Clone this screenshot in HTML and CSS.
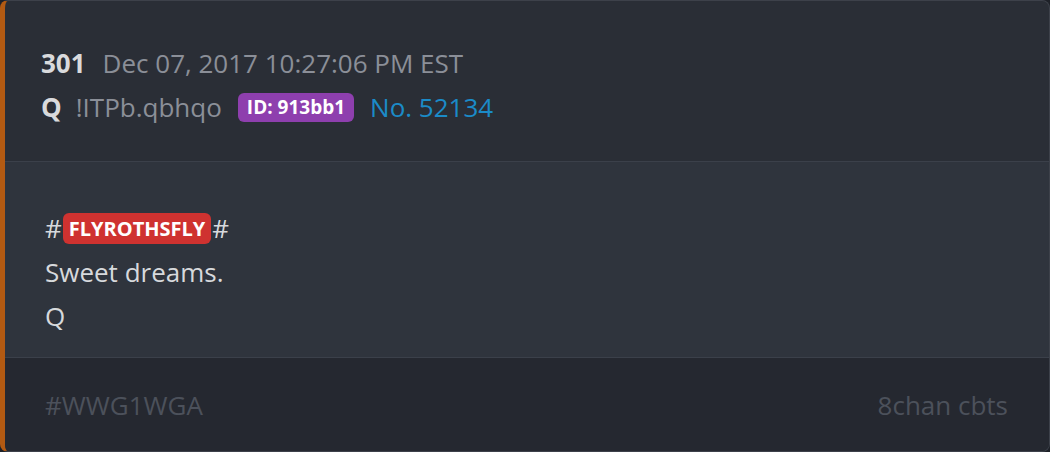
FILE: index.html
```html
<!DOCTYPE html>
<html lang="en">
  <head>
    <meta charset="UTF-8" />
    <meta name="viewport" content="width=device-width, initial-scale=1.0" />
    <title>Post 301</title>
    <link rel="stylesheet" href="styles.css">
  </head>
  <body>
    <div class="post">
      <div class="post-header">
        <div class="line">
          <span class="num">301</span>
          <span class="date">Dec 07, 2017 10:27:06 PM EST</span>
        </div>
        <div class="line">
          <span class="name">Q</span>
          <span class="trip">!ITPb.qbhqo</span>
          <span class="uid">ID: 913bb1</span>
          <a class="postno" href="#">No. 52134</a>
        </div>
      </div>
      <div class="post-body">
        <div class="line">#<span class="tag">FLYROTHSFLY</span>#</div>
        <div class="line">Sweet dreams.</div>
        <div class="line">Q</div>
      </div>
      <div class="post-footer">
        <span>#WWG1WGA</span>
        <span>8chan cbts</span>
      </div>
    </div>
  </body>
</html>
```

FILE: styles.css
```css
body {
  margin: 0;
  padding: 0;
  background-color: #1e2128;
  font-family: "Open Sans", Arial, sans-serif;
}
.post {
  height: 452px;
  box-sizing: border-box;
  display: flex;
  flex-direction: column;
  border: 1px solid #3d414a;
  border-left: 5px solid #b35a12;
  border-radius: 8px;
  overflow: hidden;
  background: #2a2e36;
}
.line {
  display: flex;
  align-items: center;
  height: 44px;
}
.post-header {
  height: 161px;
  box-sizing: border-box;
  padding: 40px 0 0 36px;
  font-size: 26px;
  border-bottom: 1px solid #3b404a;
}
.num {
  font-weight: bold;
  color: #d9dadc;
  margin-right: 17px;
}
.date {
  color: #8b8f98;
}
.name {
  font-weight: bold;
  color: #d9dadc;
  margin-right: 14px;
}
.trip {
  color: #8b8f98;
  margin-right: 16px;
}
.uid {
  background: #8e3fae;
  color: #fff;
  font-weight: bold;
  font-size: 19px;
  line-height: 29px;
  padding: 0 9px;
  border-radius: 6px;
  margin-right: 16px;
}
.postno {
  color: #1b8bc8;
  text-decoration: none;
}
.post-body {
  height: 196px;
  box-sizing: border-box;
  padding: 44px 0 0 40px;
  background: #2f343d;
  color: #d7d9dc;
  font-size: 26px;
  border-bottom: 1px solid #3b404a;
}
.tag {
  background: #cf3230;
  color: #fff;
  font-weight: bold;
  font-size: 20px;
  line-height: 31px;
  padding: 0 6px;
  border-radius: 6px;
  margin: 0 1px;
}
.post-footer {
  flex: 1;
  display: flex;
  justify-content: space-between;
  align-items: center;
  padding: 0 41px 0 40px;
  background: #252830;
  color: #4c515b;
  font-size: 26px;
}
```
